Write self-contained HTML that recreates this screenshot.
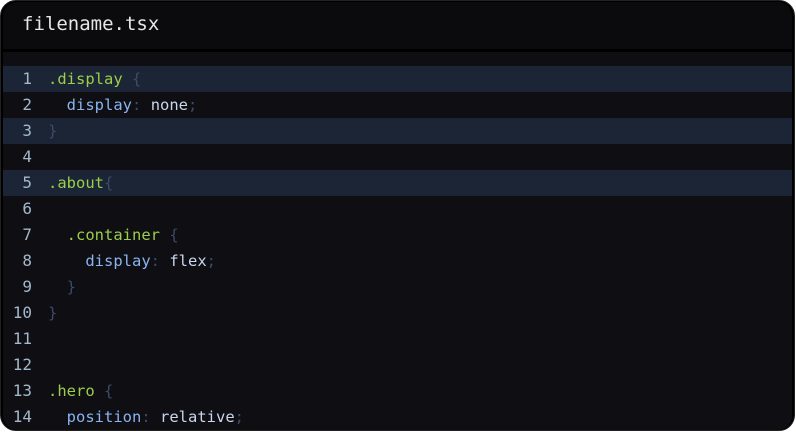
<!DOCTYPE html>
<html><head><style>
html,body{margin:0;padding:0;background:#fff;width:796px;height:432px;overflow:hidden}
.box{position:absolute;left:0;top:0;width:795px;height:431px;background:#000;border-radius:16px;overflow:hidden;box-sizing:border-box;border:1px solid #222}
.hd{position:absolute;left:2px;top:1px;right:2px;height:47px;background:#0b0b0d;border-radius:14px 14px 0 0}
.hd span{position:absolute;left:19px;top:11px;font:19px "DejaVu Sans Mono",monospace;color:#e6e6e6}
.code{position:absolute;left:2px;top:51px;right:2px;bottom:0;background:#0e0e13;border-radius:0 0 14px 14px}
.ln{position:absolute;left:0;right:0;height:26px;font:15.5px/26px "DejaVu Sans Mono",monospace;white-space:pre}
.ln.h{background:#1b2535}
.n{position:absolute;left:0;width:29px;text-align:right;color:#a3b8ca;font-size:16px}
.t{position:absolute;left:45px;color:#cdd6e4}
.s{color:#9bce4a}.p{color:#8ab4f0}.b{color:#3c4b68}.v{color:#c9d6ee}
</style></head><body>
<div class="box">
<div class="hd"><span>filename.tsx</span></div>
<div class="code">
<div class="ln h" style="top:14px"><span class="n">1</span><span class="t"><span class="s">.display</span> <span class="b">{</span></span></div>
<div class="ln" style="top:40px"><span class="n">2</span><span class="t">  <span class="p">display</span><span class="b">:</span> <span class="v">none</span><span class="b">;</span></span></div>
<div class="ln h" style="top:66px"><span class="n">3</span><span class="t"><span class="b">}</span></span></div>
<div class="ln" style="top:92px"><span class="n">4</span></div>
<div class="ln h" style="top:118px"><span class="n">5</span><span class="t"><span class="s">.about</span><span class="b">{</span></span></div>
<div class="ln" style="top:144px"><span class="n">6</span></div>
<div class="ln" style="top:170px"><span class="n">7</span><span class="t">  <span class="s">.container</span> <span class="b">{</span></span></div>
<div class="ln" style="top:196px"><span class="n">8</span><span class="t">    <span class="p">display</span><span class="b">:</span> <span class="v">flex</span><span class="b">;</span></span></div>
<div class="ln" style="top:222px"><span class="n">9</span><span class="t">  <span class="b">}</span></span></div>
<div class="ln" style="top:248px"><span class="n">10</span><span class="t"><span class="b">}</span></span></div>
<div class="ln" style="top:274px"><span class="n">11</span></div>
<div class="ln" style="top:300px"><span class="n">12</span></div>
<div class="ln" style="top:326px"><span class="n">13</span><span class="t"><span class="s">.hero</span> <span class="b">{</span></span></div>
<div class="ln" style="top:352px"><span class="n">14</span><span class="t">  <span class="p">position</span><span class="b">:</span> <span class="v">relative</span><span class="b">;</span></span></div>
</div>
</div>
</body></html>
